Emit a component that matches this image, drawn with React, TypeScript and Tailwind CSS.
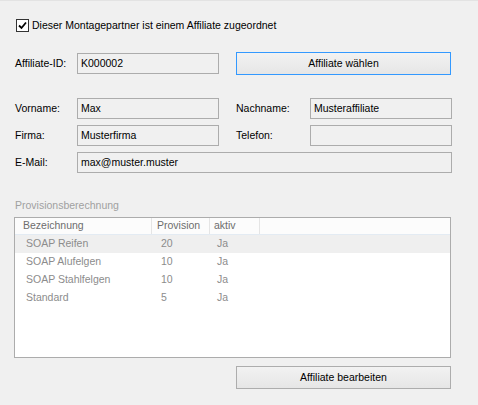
const font = { fontFamily: '"Liberation Sans", Arial, sans-serif' };

function Field({ value, className }: { value: string; className: string }) {
  return (
    <div
      className={`h-[21px] border border-[#acacac] bg-[#f0f0f0] px-[3px] flex items-center text-[10.5px] text-black ${className}`}
    >
      {value}
    </div>
  );
}

function Label({ text, className }: { text: string; className: string }) {
  return <div className={`text-[10.5px] text-black ${className}`}>{text}</div>;
}

const rows = [
  { name: "SOAP Reifen", prov: "20", aktiv: "Ja", selected: true },
  { name: "SOAP Alufelgen", prov: "10", aktiv: "Ja" },
  { name: "SOAP Stahlfelgen", prov: "10", aktiv: "Ja" },
  { name: "Standard", prov: "5", aktiv: "Ja" },
];

export default function App() {
  return (
    <div
      className="w-[478px] h-[405px] bg-[#f0f0f0] border-t border-[#e3e3e3] overflow-hidden"
      style={font}
    >
      <div className="pl-[15px] pt-[18px]">
        {/* checkbox row */}
        <div className="flex items-center h-[13px] pl-[1px]">
          <div className="w-[13px] h-[13px] border border-[#333] bg-white flex items-center justify-center">
            <svg width="9" height="9" viewBox="0 0 9 9">
              <path d="M1 4.5 L3.5 7 L8 1.5" stroke="#000" strokeWidth="1.8" fill="none" />
            </svg>
          </div>
          <span className="ml-[3px] text-[10.5px] text-black">
            Dieser Montagepartner ist einem Affiliate zugeordnet
          </span>
        </div>

        {/* affiliate id row */}
        <div className="flex items-center h-[23px] mt-[20px]">
          <Label text="Affiliate-ID:" className="w-[62px]" />
          <Field value="K000002" className="w-[142px]" />
          <button className="ml-[17px] w-[215px] h-[23px] border border-[#3399ff] bg-gradient-to-b from-[#f2f2f2] to-[#e6e6e6] text-[10.5px] text-black">
            Affiliate wählen
          </button>
        </div>

        {/* name rows */}
        <div className="flex flex-col gap-[6px] mt-[23px]">
          <div className="flex items-center">
            <Label text="Vorname:" className="w-[62px]" />
            <Field value="Max" className="w-[142px]" />
            <Label text="Nachname:" className="ml-[17px] w-[74px]" />
            <Field value="Musteraffiliate" className="w-[142px]" />
          </div>
          <div className="flex items-center">
            <Label text="Firma:" className="w-[62px]" />
            <Field value="Musterfirma" className="w-[142px]" />
            <Label text="Telefon:" className="ml-[17px] w-[74px]" />
            <Field value="" className="w-[142px]" />
          </div>
          <div className="flex items-center">
            <Label text="E-Mail:" className="w-[62px]" />
            <Field value="max@muster.muster" className="w-[375px]" />
          </div>
        </div>

        {/* provisions */}
        <div className="mt-[26px] text-[10.5px] text-[#a0a0a0] leading-[13px]">Provisionsberechnung</div>
        <div className="mt-[5px] -ml-[1px] w-[437px] h-[141px] border border-[#acacac] bg-white text-[10.5px]">
          <div className="flex h-[17px] items-center bg-[#fcfcfc] border-b border-[#e3ebf3] text-[#6d6d6d]">
            <div className="w-[137px] h-full flex items-center pl-[8px] border-r border-[#e5e5e5]">Bezeichnung</div>
            <div className="w-[58px] h-full flex items-center pl-[5px] border-r border-[#e5e5e5]">Provision</div>
            <div className="w-[50px] h-full flex items-center pl-[4px] border-r border-[#e5e5e5]">aktiv</div>
          </div>
          {rows.map((r) => (
            <div
              key={r.name}
              className={`flex h-[18px] items-center text-[#8c8c8c] ${r.selected ? "bg-[#efefef]" : ""}`}
            >
              <div className="w-[137px] pl-[11px]">{r.name}</div>
              <div className="w-[58px] pl-[9px]">{r.prov}</div>
              <div className="w-[50px] pl-[7px]">{r.aktiv}</div>
            </div>
          ))}
        </div>

        <div className="flex mt-[8px]">
          <button className="ml-[221px] w-[215px] h-[23px] border border-[#adadad] bg-gradient-to-b from-[#f2f2f2] to-[#e6e6e6] text-[10.5px] text-black">
            Affiliate bearbeiten
          </button>
        </div>
      </div>
    </div>
  );
}
